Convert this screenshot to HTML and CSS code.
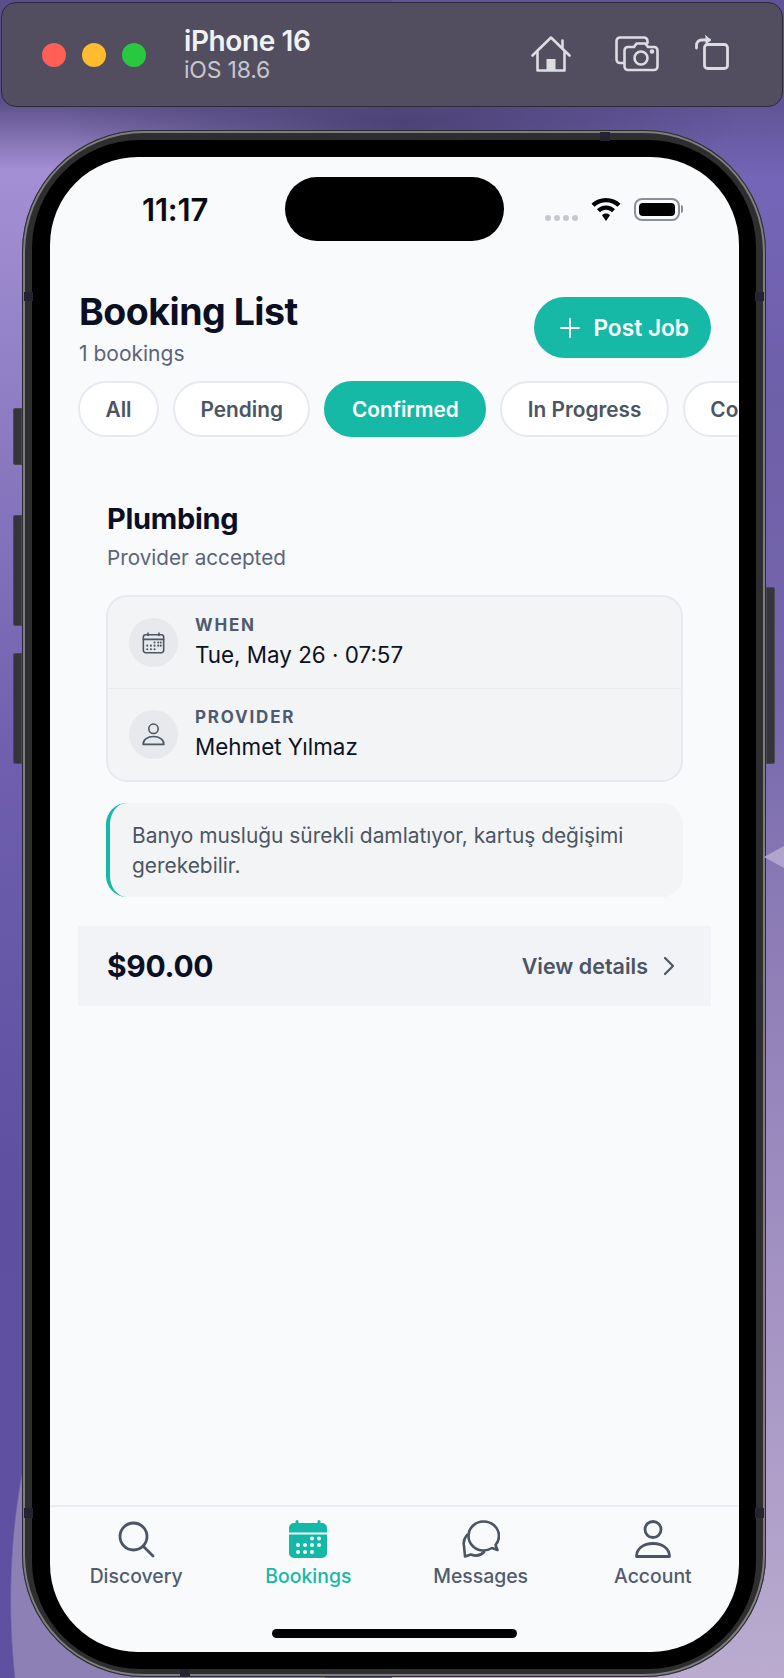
FILE: index.html
```html
<!DOCTYPE html>
<html lang="en">
<head>
<meta charset="utf-8">
<title>Booking List</title>
<link rel="stylesheet" href="styles.css">
</head>
<body>
<div class="desktop">
  <header class="toolbar">
    <div class="lights"><span class="light red"></span><span class="light amber"></span><span class="light green"></span></div>
    <div class="device"><div class="device-name">iPhone 16</div><div class="device-os">iOS 18.6</div></div>
    <div class="tools">
      <svg class="tool-home" viewBox="0 0 40 36" fill="none" stroke="#dcdce3" stroke-width="2.6" stroke-linecap="round" stroke-linejoin="round"><path d="M1.5 19.5 20 1.5l18.500 18"/><path d="M6.500 16v18.500h27V16"/><path d="M31.500 12V4.500"/><path d="M15.500 34V23h9v11z" fill="#dcdce3" stroke="none"/></svg>
      <svg class="tool-cam" viewBox="0 0 44 36" fill="none" stroke="#dcdce3" stroke-width="2.6" stroke-linecap="round" stroke-linejoin="round"><path d="M9 27H5a3.500 3.500 0 0 1-3.500-3.500V5A3.500 3.500 0 0 1 5 1.500h24A3.500 3.500 0 0 1 32.500 5v2"/><path d="M13 11h6l2.500-3.500h9L33 11h6a3.500 3.500 0 0 1 3.500 3.500v16A3.500 3.500 0 0 1 39 34H13a3.500 3.500 0 0 1-3.500-3.500v-16A3.500 3.500 0 0 1 13 11z"/><circle cx="26" cy="22" r="6.500"/><circle cx="37" cy="15.500" r="1" fill="#dcdce3"/></svg>
      <svg class="tool-rot" viewBox="0 0 34 36" fill="none" stroke="#dcdce3" stroke-width="2.800" stroke-linecap="round" stroke-linejoin="round"><rect x="9.500" y="10.500" width="23" height="24" rx="3"/><path d="M1.500 14V11a5 5 0 0 1 5-5h8"/><path d="M10.500 1.500 15.500 6l-5 4.500" fill="#dcdce3" stroke-width="1"/></svg>
    </div>
  </header>

  <div class="phone">
    <span class="hw-btn hw-mute"></span><span class="hw-btn hw-up"></span><span class="hw-btn hw-down"></span><span class="hw-btn hw-power"></span>
    <div class="phone-frame">
      <div class="bezel">
        <div class="screen">
          <span class="island"></span>
          <div class="status">
            <span class="time">11:17</span>
            <div class="status-icons">
              <span class="signal"><i></i><i></i><i></i><i></i></span>
              <svg class="wifi" viewBox="0 0 30 23"><path d="M15 0C9.300 0 4.200 2.200.5 5.800l3 3C6.400 5.900 10.500 4.200 15 4.200s8.600 1.700 11.500 4.600l3-3C25.800 2.200 20.700 0 15 0z"/><path d="M15 7.600c-3.500 0-6.700 1.400-9 3.700l3 3c1.500-1.500 3.700-2.500 6-2.500s4.500 1 6 2.500l3-3c-2.300-2.300-5.500-3.700-9-3.700z"/><path d="M15 15.500c-1.600 0-3 .6-4 1.700l4 5.800 4-5.800c-1-1.100-2.400-1.700-4-1.700z"/></svg>
              <span class="battery"><span class="battery-fill"></span></span>
              <span class="battery-cap"></span>
            </div>
          </div>

          <main class="content">
            <section class="page-head">
              <div>
                <h1 class="page-title">Booking List</h1>
                <p class="page-sub">1 bookings</p>
              </div>
              <button class="post-btn">
                <svg class="post-plus" viewBox="0 0 20 20" fill="none" stroke="#fff" stroke-width="1.800" stroke-linecap="round"><path d="M10 1v18M1 10h18"/></svg>
                Post Job
              </button>
            </section>

            <nav class="filters">
              <span class="chip">All</span>
              <span class="chip">Pending</span>
              <span class="chip chip-on">Confirmed</span>
              <span class="chip">In Progress</span>
              <span class="chip">Completed</span>
            </nav>

            <article class="card">
              <div class="card-body">
                <h2 class="card-title">Plumbing</h2>
                <p class="card-sub">Provider accepted</p>
                <div class="info">
                  <div class="info-row">
                    <span class="info-icon">
                      <svg class="ico-cal" viewBox="0 0 24 24" fill="none" stroke="#4b5563" stroke-width="1.500" stroke-linecap="round" stroke-linejoin="round"><path d="M6.750 3v2.250M17.250 3v2.250"/><rect x="2.250" y="4.500" width="19.500" height="17.250" rx="2.250"/><path d="M2.250 9h19.500"/><g fill="#4b5563" stroke="none"><circle cx="13" cy="12" r="1"/><circle cx="16.500" cy="12" r="1"/><circle cx="19" cy="12" r="1"/><circle cx="6" cy="15" r="1"/><circle cx="9.500" cy="15" r="1"/><circle cx="13" cy="15" r="1"/><circle cx="16.500" cy="15" r="1"/><circle cx="19" cy="15" r="1"/><circle cx="6" cy="18.500" r="1"/><circle cx="9.500" cy="18.500" r="1"/><circle cx="13" cy="18.500" r="1"/></g></svg>
                    </span>
                    <div><div class="info-label">WHEN</div><div class="info-value">Tue, May 26 · 07:57</div></div>
                  </div>
                  <div class="info-row info-row-split">
                    <span class="info-icon">
                      <svg class="ico-user" viewBox="0 0 24 24" fill="none" stroke="#4b5563" stroke-width="1.500" stroke-linecap="round" stroke-linejoin="round"><circle cx="12" cy="6.500" r="4.500"/><path d="M2 21.500c0-4.500 4.500-7.500 10-7.500s10 3 10 7.500z"/></svg>
                    </span>
                    <div><div class="info-label">PROVIDER</div><div class="info-value">Mehmet Yılmaz</div></div>
                  </div>
                </div>
                <div class="note">Banyo musluğu sürekli damlatıyor, kartuş değişimi gerekebilir.</div>
              </div>
              <div class="card-foot">
                <span class="price">$90.00</span>
                <span class="details">View details
                  <svg class="chev" viewBox="0 0 12 20" fill="none" stroke="#4b5563" stroke-width="2.200" stroke-linecap="round" stroke-linejoin="round"><path d="M2 2l8 8-8 8"/></svg>
                </span>
              </div>
            </article>
          </main>

          <nav class="tabs">
            <div class="tab">
              <svg class="tab-ico" viewBox="0 0 38 38" fill="none" stroke="#4b5563" stroke-width="2.800" stroke-linecap="round"><circle cx="16.500" cy="16.500" r="13.500"/><path d="M26.500 26.500 36 36"/></svg>
              <span>Discovery</span>
            </div>
            <div class="tab tab-on">
              <svg class="tab-ico" viewBox="0 0 38 38"><path fill="#14b8a6" d="M8 0a1.500 1.500 0 0 1 1.500 1.500V3h19V1.500a1.500 1.500 0 0 1 3 0V3h1.500A5 5 0 0 1 38 8v4.500H0V8a5 5 0 0 1 5-5h1.500V1.500A1.500 1.500 0 0 1 8 0zM0 14.500h38V33a5 5 0 0 1-5 5H5a5 5 0 0 1-5-5z"/><g fill="#fafbfd"><circle cx="23" cy="18.500" r="2"/><circle cx="30" cy="18.500" r="2"/><circle cx="9" cy="25" r="2"/><circle cx="16" cy="25" r="2"/><circle cx="23" cy="25" r="2"/><circle cx="30" cy="25" r="2"/><circle cx="9" cy="32" r="2"/><circle cx="16" cy="32" r="2"/><circle cx="23" cy="32" r="2"/></g></svg>
              <span>Bookings</span>
            </div>
            <div class="tab">
              <svg class="tab-ico" viewBox="0 0 38 38" fill="none" stroke="#4b5563" stroke-width="2.600" stroke-linecap="round" stroke-linejoin="round"><path d="M22.500 1.500c-8.300 0-15 6.500-15 14.500 0 8 6.700 14.500 15 14.500 3.200 0 6-1 8.500-2.500l5.500 2-2-5c2.300-2.600 3.500-5.700 3.500-9 0-8-6.700-14.500-15.500-14.500z" transform="translate(-1 0)"/><path d="M5 15C2.500 18 1 21.500 2 26l1 10.500 6-2c5 2 9.500 1.300 13-2.500"/></svg>
              <span>Messages</span>
            </div>
            <div class="tab">
              <svg class="tab-ico" viewBox="0 0 38 38" fill="none" stroke="#4b5563" stroke-width="2.800" stroke-linecap="round" stroke-linejoin="round"><circle cx="19" cy="9.500" r="8"/><path d="M2.500 36.500c0-8 7-13 16.500-13s16.500 5 16.500 13z"/></svg>
              <span>Account</span>
            </div>
          </nav>
          <div class="home-bar"><span class="home-indicator"></span></div>
        </div>
      </div>
    </div>
    <span class="antenna ant-l1"></span><span class="antenna ant-l2"></span><span class="antenna ant-r1"></span><span class="antenna ant-r2"></span><span class="antenna ant-t"></span><span class="antenna ant-b"></span>
  </div>
</div>
</body>
</html>
```

FILE: styles.css
```css
* { box-sizing: border-box; }
html, body { margin: 0; padding: 0; }
body { font-family: Inter, "Noto Sans", "Liberation Sans", sans-serif; overflow: hidden; }

.desktop {
  position: relative;
  width: 784px;
  height: 1678px;
  overflow: hidden;
  padding-top: 2px;
  background:
    radial-gradient(ellipse 160px 342px at 170px 1600px, #8d80b4 0 99%, transparent 100%) no-repeat,
    radial-gradient(ellipse 340px 70px at 400px 122px, #4c4276 0, rgba(76,66,118,0) 100%) no-repeat,
    linear-gradient(180deg, #5a4f88 0, #5a4f88 100px, #a48fd4 170px, #9483c8 340px, #6f5fae 750px, #5e4fa0 1200px, #5f50a0 1678px) left top / 392px 100% no-repeat,
    linear-gradient(180deg, #5f5494 0, #5f5494 100px, #7565b8 180px, #6e5fa9 400px, #7567ac 700px, #8a7ab5 900px, #a493c3 1300px, #baabcf 1678px) right top / 392px 100% no-repeat;
}
.desktop::after {
  content: "";
  position: absolute;
  right: 0;
  top: 846px;
  width: 20px;
  height: 22px;
  background: #b0a6cc;
  clip-path: polygon(0 50%, 100% 0, 100% 100%);
}

/* simulator toolbar */
.toolbar {
  height: 105px;
  margin: 0 1px;
  padding: 0 53px 0 40px;
  display: flex;
  align-items: center;
  background: #524e60;
  border: 1px solid #2c2a3c;
  border-radius: 15px;
}
.lights { display: flex; gap: 16px; }
.light { width: 24px; height: 24px; border-radius: 50%; }
.red { background: #ff5f57; }
.amber { background: #febc2e; }
.green { background: #28c840; }
.device { margin-left: 38px; flex: 1; margin-top: 1px; }
.device-name { font-size: 28px; line-height: 30px; font-weight: 600; color: #f1f1f4; letter-spacing: -.4px; }
.device-os { font-size: 23px; line-height: 29px; color: #c7c6ce; letter-spacing: -.2px; }
.tools { display: flex; align-items: center; margin-bottom: 2px; }
.tool-home { width: 40px; height: 36px; }
.tool-cam { width: 44px; height: 36px; margin-left: 44px; }
.tool-rot { width: 34px; height: 36px; margin-left: 36px; margin-bottom: 4px; }

/* device */
.phone {
  position: relative;
  width: 744px;
  height: 1547px;
  margin: 23px 0 0 22px;
}
.hw-btn { position: absolute; background: #35343b; box-shadow: inset 0 0 0 1px #4a4952; }
.hw-mute { left: -9px; top: 278px; width: 9px; height: 57px; border-radius: 3px 0 0 3px; }
.hw-up { left: -9px; top: 385px; width: 9px; height: 111px; border-radius: 3px 0 0 3px; }
.hw-down { left: -9px; top: 523px; width: 9px; height: 111px; border-radius: 3px 0 0 3px; }
.hw-power { right: -9px; top: 457px; width: 9px; height: 177px; border-radius: 0 3px 3px 0; }
.antenna { position: absolute; background: #252332; }
.ant-l1 { left: 2px; top: 162px; width: 9px; height: 9px; }
.ant-l2 { left: 2px; top: 1378px; width: 9px; height: 10px; }
.ant-r1 { right: 2px; top: 162px; width: 9px; height: 9px; }
.ant-r2 { right: 2px; top: 1378px; width: 9px; height: 10px; }
.ant-t { left: 578px; top: 2px; width: 10px; height: 9px; }
.ant-b { left: 158px; bottom: 1px; width: 10px; height: 7px; }
.phone-frame {
  width: 100%;
  height: 100%;
  padding: 10px 10px 8px 10px;
  border-radius: 122px;
  background: #2e2e2e;
  box-shadow: inset 0 0 0 1px #2a2a30, inset 0 0 0 3px #7d7d82;
}
.bezel {
  height: 100%;
  padding: 17px 17px 17px 18px;
  border-radius: 108px;
  background: #000;
}
.screen {
  position: relative;
  display: flex;
  flex-direction: column;
  height: 100%;
  overflow: hidden;
  border-radius: 88px;
  background: #f9fafc;
}

/* status bar */
.island {
  position: absolute;
  left: 235px;
  top: 20px;
  width: 219px;
  height: 64px;
  border-radius: 32px;
  background: #000;
}
.status {
  height: 84px;
  padding: 20px 56px 0 92px;
  flex: none;
  display: flex;
  align-items: center;
  justify-content: space-between;
}
.time { font-size: 31px; font-weight: 600; color: #0b0b0f; letter-spacing: -.2px; }
.status-icons { display: flex; align-items: center; }
.signal { display: flex; gap: 3px; margin: 17px 13px 0 0; }
.signal i { width: 6px; height: 6px; border-radius: 50%; background: #c7c8cf; }
.wifi { width: 30px; height: 23px; fill: #000; margin-right: 13px; }
.battery {
  width: 46px;
  height: 23px;
  padding: 3px;
  border: 2px solid #8e8e98;
  border-radius: 8px;
  display: flex;
}
.battery-fill { flex: 1; background: #000; border-radius: 4px; }
.battery-cap { width: 2px; height: 8px; margin-left: 1px; background: #8e8e98; border-radius: 0 2px 2px 0; }

/* page */
.content { flex: 1; min-height: 0; padding: 48px 0 0 28px; }
.page-head { display: flex; justify-content: space-between; padding: 0 28px 0 1px; }
.page-title { margin: 0; font-size: 37.500px; line-height: 46px; font-weight: 700; color: #0b0f24; letter-spacing: -.5px; }
.page-sub { margin: 5px 0 0; font-size: 21px; line-height: 28px; color: #5b6478; }
.post-btn {
  height: 61px;
  margin-top: 8px;
  padding: 0 22px 0 26px;
  display: flex;
  align-items: center;
  gap: 13px;
  border: 0;
  border-radius: 31px;
  background: #16b8a6;
  color: #fff;
  font: 600 22.700px Inter, sans-serif;
}
.post-plus { width: 20px; height: 20px; }

.filters { display: flex; gap: 14px; margin-top: 13px; overflow: hidden; }
.chip {
  flex: none;
  height: 56px;
  padding: 0 25.500px;
  display: flex;
  align-items: center;
  border: 2px solid #e6e9f0;
  border-radius: 28px;
  background: #fff;
  color: #4b5563;
  font-size: 20.800px;
  font-weight: 600;
}
.chip-on { background: #16b8a6; border-color: #16b8a6; color: #fff; }

.card { margin: 49px 28px 0 0; }
.card-body { padding: 0 28px 29px; }
.card-title { margin: 0; padding: 15px 0 0 1px; font-size: 29px; line-height: 36px; font-weight: 700; color: #0b0f24; letter-spacing: -.3px; }
.card-sub { margin: 7px 0 0; padding-left: 1px; font-size: 20.700px; line-height: 28px; color: #5b6478; }
.info {
  margin-top: 23px;
  height: 187px;
  border: 2px solid #e6e9f0;
  border-radius: 21px;
  background: #f3f4f6;
}
.info-row { height: 91px; display: flex; align-items: center; padding-left: 21px; gap: 17px; }
.info-row-split { border-top: 1px solid #e8eaef; height: 92px; }
.info-icon {
  width: 49px;
  height: 49px;
  border-radius: 50%;
  background: #e8e9ec;
  display: flex;
  align-items: center;
  justify-content: center;
}
.ico-cal { width: 25px; height: 25px; }
.ico-user { width: 25px; height: 25px; }
.info-label { font-size: 17px; line-height: 22px; font-weight: 700; color: #4f5a6e; letter-spacing: 1.800px; }
.info-value { font-size: 22.400px; line-height: 32px; color: #0d1222; margin-top: 3px; }
.note {
  margin-top: 21px;
  height: 94px;
  padding: 18px 40px 0 22px;
  border-left: 4px solid #16b8a6;
  border-radius: 21px;
  background: #f3f4f6;
  font-size: 20.900px;
  line-height: 30px;
  color: #4b5563;
}
.card-foot {
  height: 80px;
  padding: 0 35px 0 29px;
  display: flex;
  align-items: center;
  justify-content: space-between;
  background: #f1f3f6;
}
.price { font-size: 30px; font-weight: 700; color: #0b0f24; letter-spacing: -.3px; }
.details { display: flex; align-items: center; gap: 14px; font-size: 21.500px; font-weight: 600; color: #4b5563; }
.chev { width: 14px; height: 20px; }

/* tab bar */
.tabs {
  flex: none;
  display: flex;
  height: 102px;
  padding-top: 13px;
  border-top: 2px solid #e8ecf3;
}
.tab {
  flex: 1;
  display: flex;
  flex-direction: column;
  align-items: center;
  gap: 6px;
  font-size: 19.400px;
  line-height: 24px;
  font-weight: 500;
  color: #525c6e;
}
.tab-on { color: #16b8a6; }
.tab-ico { width: 38px; height: 38px; }
.home-bar { flex: none; height: 45px; padding-top: 22px; display: flex; justify-content: center; }
.home-indicator { width: 245px; height: 9px; border-radius: 5px; background: #000; }
```
